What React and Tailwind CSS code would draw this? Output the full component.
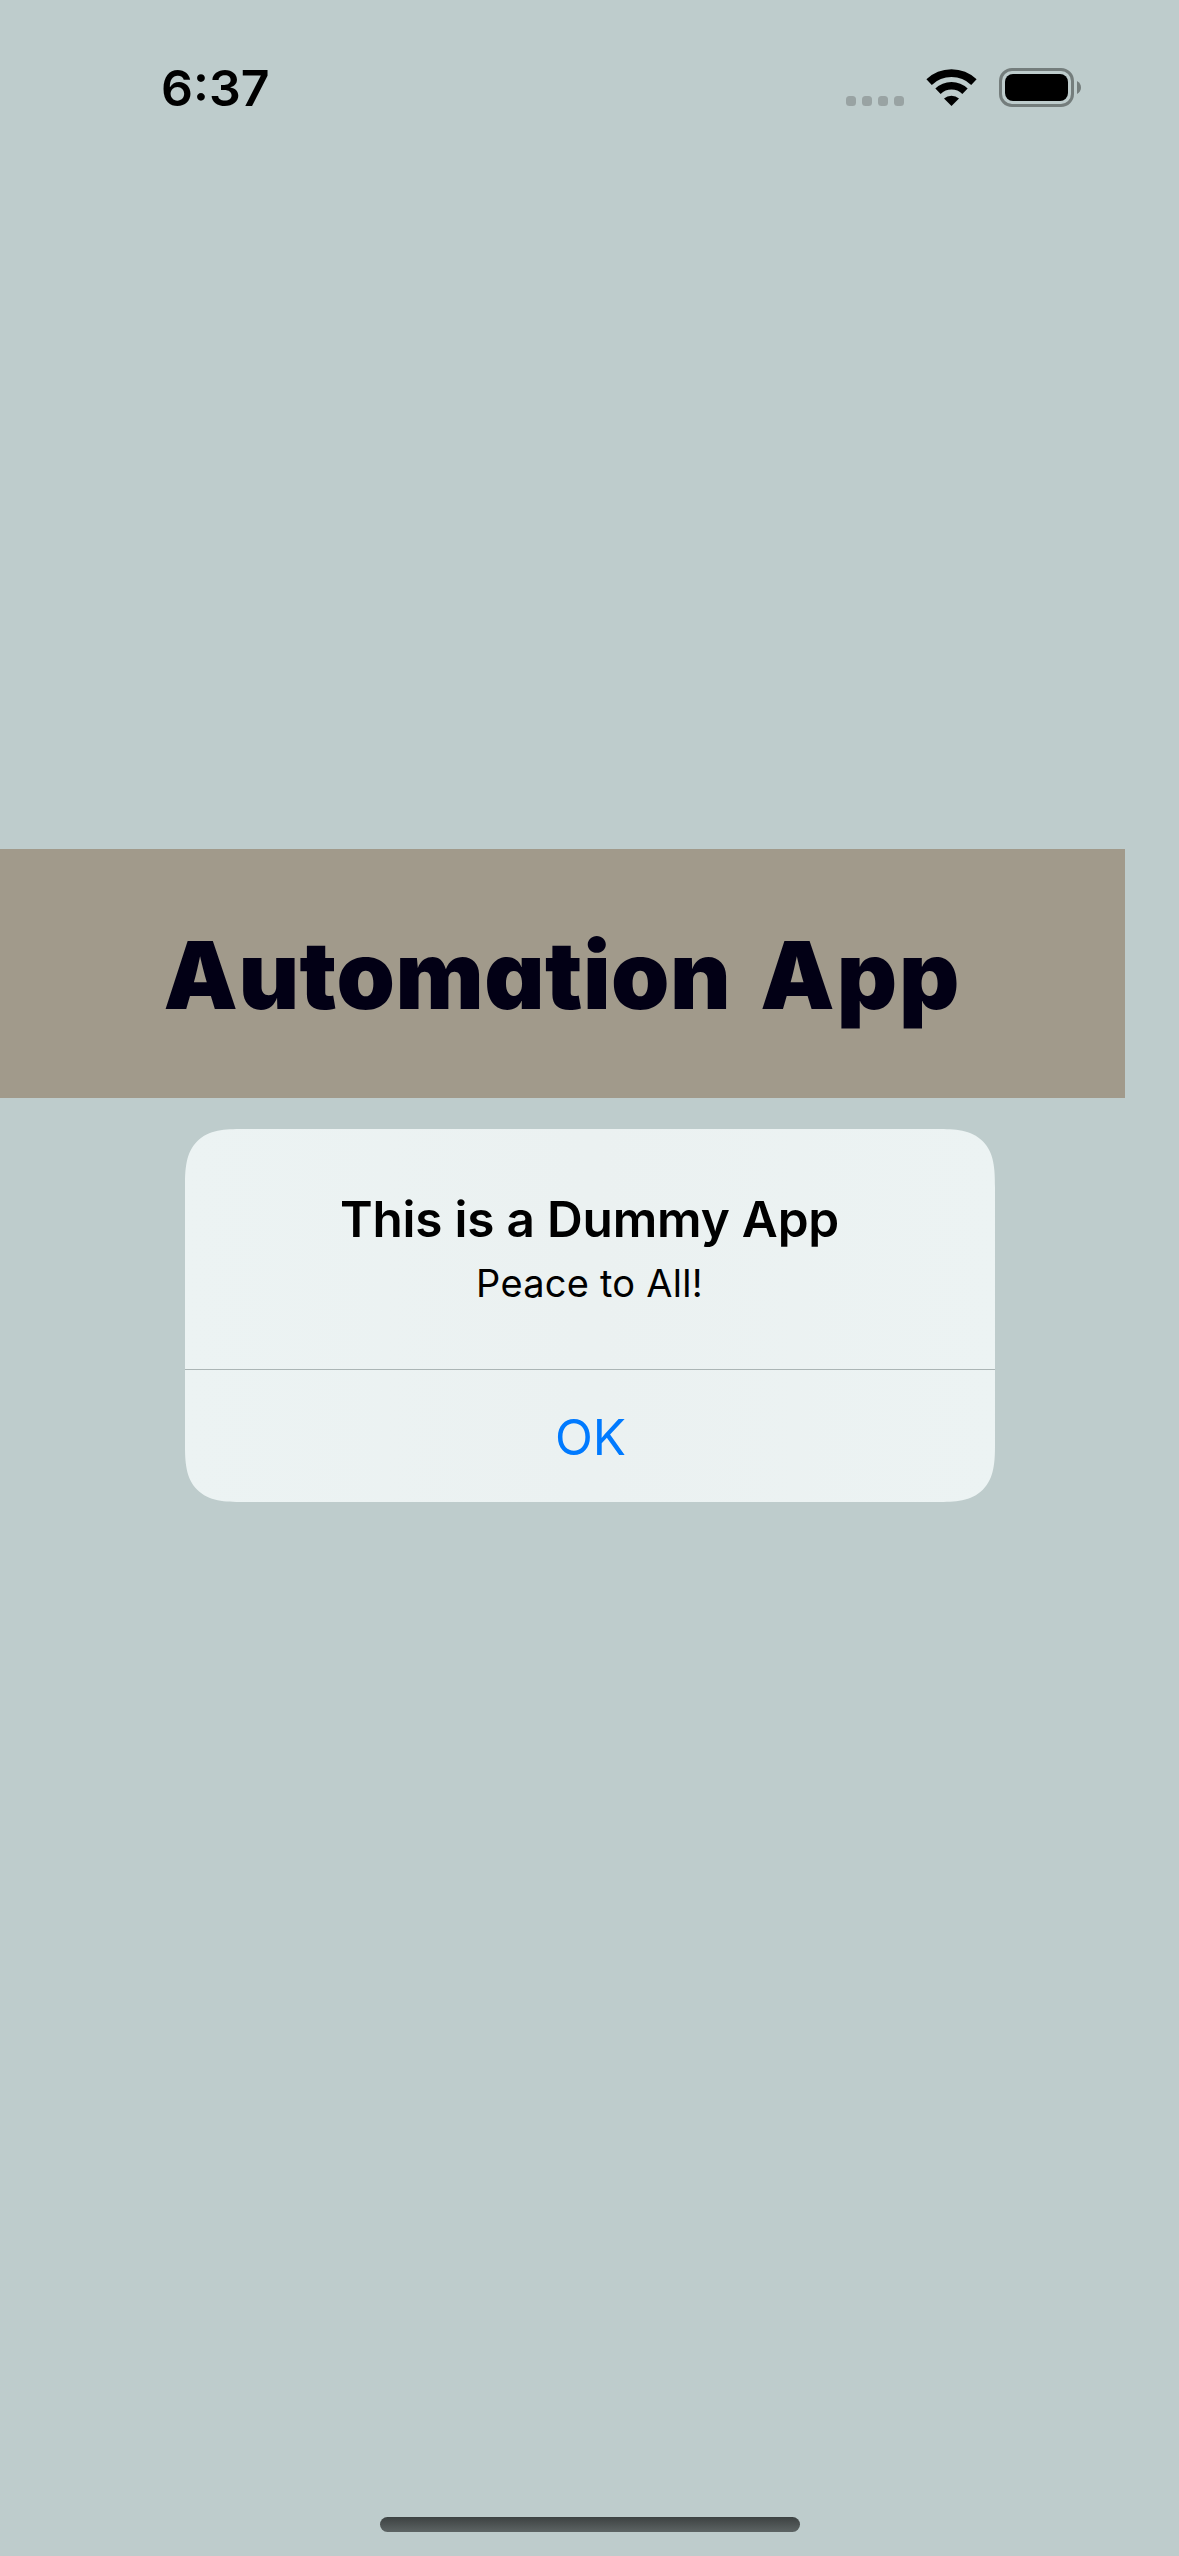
function WifiIcon() {
  return (
    <svg width="51" height="38" viewBox="0 0 51 38" fill="none" className="mt-[69px] ml-[22px]">
      <path d="M3.1 13.1 A32.5 32.5 0 0 1 47.9 13.1" stroke="#000" strokeWidth="7.8" />
      <path d="M12 22.3 A19.3 19.3 0 0 1 39 22.3" stroke="#000" strokeWidth="7.6" />
      <path d="M18 29.6 A11 11 0 0 1 33 29.6 L25.5 37 Z" fill="#000" />
    </svg>
  );
}

function Battery() {
  return (
    <div className="mt-[68px] ml-[22px] flex items-center h-[39px]">
      <div className="w-[75px] h-[39px] rounded-[13px] border-[3px] border-[#747d7c] p-[3px]">
        <div className="h-full w-full rounded-[8px] bg-black" />
      </div>
      <svg width="4" height="13" viewBox="0 0 4 13" className="ml-[3px]">
        <path d="M0 0 C5.3 2.6 5.3 10.4 0 13 Z" fill="#747d7c" />
      </svg>
    </div>
  );
}

function StatusBar() {
  return (
    <header className="flex items-start h-[160px] pl-[161px] text-black">
      <div className="mt-[58px] w-[685px] text-[50px] leading-[60px] font-semibold">6:37</div>
      <div className="mt-[96px] flex gap-[6px]">
        <span className="size-[10px] rounded-[3.5px] bg-[#99a3a3]" />
        <span className="size-[10px] rounded-[3.5px] bg-[#99a3a3]" />
        <span className="size-[10px] rounded-[3.5px] bg-[#99a3a3]" />
        <span className="size-[10px] rounded-[3.5px] bg-[#99a3a3]" />
      </div>
      <WifiIcon />
      <Battery />
    </header>
  );
}

function Alert() {
  return (
    <section
      role="alertdialog"
      className="mx-auto mt-[31px] flex h-[373px] w-[810px] flex-col overflow-hidden rounded-[42px] bg-linear-to-r from-[#ecf3f3] via-[#ebf1f1] to-[#ecf3f3] text-center supports-[corner-shape:squircle]:rounded-[58px] supports-[corner-shape:squircle]:[corner-shape:superellipse(1.55)]"
    >
      <div className="h-[240px] pt-[60px]">
        <h2 className="text-[49.5px] leading-[60px] font-semibold tracking-[-0.2px] whitespace-nowrap">This is a Dummy App</h2>
        <p className="text-[38px] leading-[68px] tracking-[0.25px] whitespace-nowrap">Peace to All!</p>
      </div>
      <button className="h-[133px] border-t border-[#abb5b5] pl-[2px] text-[49.5px] leading-[134px] text-[#007aff]">OK</button>
    </section>
  );
}

export default function App() {
  return (
    <main className="flex h-[2556px] w-[1179px] flex-col bg-[#becccc] font-['Inter',sans-serif]">
      <StatusBar />
      <div className="mt-[689px] h-[249px] w-[1125px] bg-[#a19a8b]">
        <h1 className="text-center text-[93.5px] leading-[252px] font-black tracking-[0.5px] whitespace-nowrap text-[#020015] [word-spacing:10px] [font-feature-settings:'cv11']">
          Automation <span className="tracking-[2px]">App</span>
        </h1>
      </div>
      <Alert />
      <div className="mx-auto mt-auto mb-[24px] h-[15px] w-[420px] rounded-full bg-linear-to-b from-[#3d4242] to-[#5d6464]" />
    </main>
  );
}
